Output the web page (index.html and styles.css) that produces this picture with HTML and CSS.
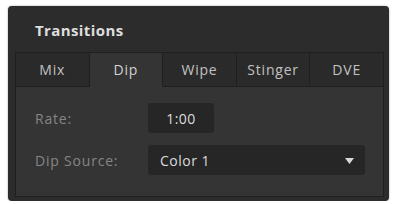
FILE: index.html
```html
<!DOCTYPE html>
<html lang="en">
<head>
  <meta charset="UTF-8">
  <meta name="viewport" content="width=device-width, initial-scale=1.0">
  <title>Transitions</title>
  <link rel="stylesheet" href="styles.css">
</head>
<body>
  <!-- Transitions Panel -->
  <div class="panel">
    <div class="panel-header">
      <h1>Transitions</h1>
    </div>

    <div class="panel-body">
      <!-- Tabs -->
      <div class="tabs">
        <div class="tab">Mix</div>
        <div class="tab active">Dip</div>
        <div class="tab">Wipe</div>
        <div class="tab">Stinger</div>
        <div class="tab">DVE</div>
      </div>

      <!-- Settings -->
      <div class="settings">
        <div class="row">
          <span class="label">Rate:</span>
          <div class="rate-box">1:00</div>
        </div>
        <div class="row">
          <span class="label">Dip Source:</span>
          <div class="select">
            <span>Color 1</span>
            <svg class="arrow" width="9" height="6" viewBox="0 0 9 6">
              <path d="M0 0 H9 L4.5 6 Z" fill="#d8d8d8"/>
            </svg>
          </div>
        </div>
      </div>
    </div>
  </div>
</body>
</html>
```

FILE: styles.css
```css
/* General Styles */
body {
  margin: 0;
  padding: 0;
  background: #fff;
  font-family: 'Open Sans', sans-serif;
}

/* Panel */
.panel {
  width: 381px;
  height: 195px;
  margin: 6px 0 0 8px;
  background: #2c2c2c;
  border-radius: 4px;
  box-shadow: 0 0 2px rgba(0, 0, 0, 0.4);
  display: flex;
  flex-direction: column;
  padding: 0 5px 4px 7px;
  box-sizing: border-box;
}

.panel-header {
  height: 46px;
  display: flex;
  align-items: center;
  padding-left: 20px;
  padding-top: 1px;
  box-sizing: border-box;
}

h1 {
  margin: 0;
  font-size: 15px;
  font-weight: 700;
  color: #dedede;
  letter-spacing: 0.4px;
}

.panel-body {
  flex: 1;
  background: #343434;
  border: 1px solid #1f1f1f;
  display: flex;
  flex-direction: column;
}

/* Tabs */
.tabs {
  display: flex;
  height: 34px;
}

.tab {
  flex: 1;
  display: flex;
  align-items: center;
  justify-content: center;
  background: #2a2a2a;
  border-right: 1px solid #1f1f1f;
  border-bottom: 1px solid #1f1f1f;
  color: #c2c2c2;
  font-size: 14px;
  letter-spacing: 0.8px;
}

.tab:last-child {
  border-right: none;
}

.tab.active {
  background: #343434;
  border-bottom-color: transparent;
  color: #d2d2d2;
}

/* Settings */
.settings {
  display: flex;
  flex-direction: column;
  gap: 12px;
  padding: 16px 18px 0 19px;
}

.row {
  display: flex;
  align-items: center;
  height: 30px;
}

.label {
  width: 113px;
  color: #858585;
  font-size: 14px;
  letter-spacing: 0.8px;
}

.rate-box {
  width: 66px;
  height: 30px;
  background: #262626;
  border-radius: 3px;
  display: flex;
  align-items: center;
  justify-content: center;
  color: #dcdcdc;
  font-size: 14px;
  letter-spacing: 0.5px;
}

.select {
  flex: 1;
  height: 30px;
  background: #262626;
  border-radius: 3px;
  display: flex;
  align-items: center;
  justify-content: space-between;
  padding: 0 11px 0 12px;
  color: #dcdcdc;
  font-size: 14px;
  letter-spacing: 0.5px;
}

.arrow {
  margin-top: 2px;
}
```
